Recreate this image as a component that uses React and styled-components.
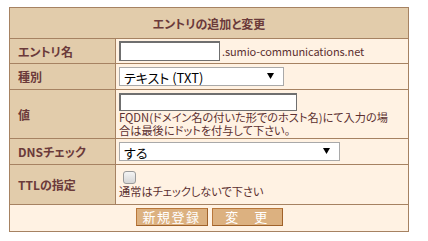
import React from 'react'
import styled, { createGlobalStyle } from 'styled-components'

const GlobalStyle = createGlobalStyle`
  body {
    margin: 0;
    background: #fff;
    font-family: "Noto Sans CJK JP", "Liberation Sans", sans-serif;
  }
`

const Page = styled.div`
  padding: 7px 0 0 9px;
`

const Panel = styled.form`
  width: 398px;
  border: 1px solid #a68262;
  background: #fff2e3;
  font-feature-settings: "palt";
`

const Header = styled.div`
  height: 30px;
  display: flex;
  align-items: center;
  justify-content: center;
  background: #e2ccab;
  border-bottom: 1px solid #a68262;
  color: #6b3a3a;
  font-size: 12px;
  font-weight: bold;
`

const Row = styled.div`
  display: grid;
  grid-template-columns: 106px 1fr;
  height: ${p => p.h}px;
  border-bottom: 1px solid #a68262;
`

const Label = styled.div`
  display: flex;
  align-items: center;
  padding-left: 8px;
  background: #e2ccab;
  border-right: 1px solid #a68262;
  color: #6b3a3a;
  font-size: 12px;
  font-weight: bold;
`

const Cell = styled.div`
  display: flex;
  flex-direction: ${p => (p.column ? 'column' : 'row')};
  align-items: ${p => (p.column ? 'flex-start' : 'center')};
  padding: ${p => p.pad || '0'} 0 0 3px;
  color: #5c3030;
  font-size: 12px;
`

const TextInput = styled.input`
  box-sizing: border-box;
  width: ${p => p.w}px;
  height: ${p => p.h}px;
  margin: 0;
  border: 1px solid #6f6f6f;
  border-top-width: 2px;
  border-left-width: 2px;
  background: #fff;
  padding: 0 2px;
`

const Domain = styled.span`
  margin-left: 2px;
  font-size: 11px;
  letter-spacing: -0.1px;
`

const SelectWrap = styled.div`
  position: relative;
  width: ${p => p.w}px;
  height: 19px;
`

const Select = styled.select`
  box-sizing: border-box;
  appearance: none;
  width: 100%;
  height: 100%;
  margin: 0;
  padding: 0 0 0 4px;
  border: 1px solid #a9a9a9;
  border-radius: 0;
  background: #fff;
  color: #000;
  font-family: "Noto Sans CJK JP", sans-serif;
  font-size: 13px;
  font-feature-settings: "palt";
`

const Arrow = styled.svg`
  position: absolute;
  right: 10px;
  top: 6px;
  pointer-events: none;
`

const Note = styled.div`
  margin-top: ${p => p.gap || 0}px;
  line-height: 13px;
  white-space: nowrap;
  font-size: 11.2px;
`

const Check = styled.input`
  appearance: none;
  box-sizing: border-box;
  width: 13px;
  height: 13px;
  margin: 0 0 0 4px;
  border: 1px solid #9a9a9a;
  border-radius: 3px;
  background: linear-gradient(#f4f4f4, #d6d6d6);
`

const Footer = styled.div`
  height: 26px;
  display: flex;
  justify-content: center;
  gap: 4px;
  padding-top: 3px;
  box-sizing: border-box;
`

const Button = styled.button`
  box-sizing: border-box;
  width: ${p => p.w}px;
  height: 18px;
  margin: 0;
  padding: 0;
  border: 1px solid #b9773a;
  border-right-color: #a0622a;
  border-bottom-color: #a0622a;
  background: #dcb180;
  color: #fff;
  font-family: "Noto Sans CJK JP", sans-serif;
  font-size: 13px;
  line-height: 16px;
  letter-spacing: 1.5px;
`

const DropArrow = () => (
  <Arrow width="7" height="6" viewBox="0 0 7 6">
    <path d="M0 0 H7 L3.5 6 Z" fill="#000" />
  </Arrow>
)

export default function App() {
  return (
    <Page>
      <GlobalStyle />
      <Panel onSubmit={e => e.preventDefault()}>
        <Header>エントリの追加と変更</Header>
        <Row h={24}>
          <Label>エントリ名</Label>
          <Cell>
            <TextInput w={101} h={20} />
            <Domain>.sumio-communications.net</Domain>
          </Cell>
        </Row>
        <Row h={25}>
          <Label>種別</Label>
          <Cell>
            <SelectWrap w={165}>
              <Select defaultValue="TXT">
                <option value="TXT">テキスト (TXT)</option>
              </Select>
              <DropArrow />
            </SelectWrap>
          </Cell>
        </Row>
        <Row h={48}>
          <Label>値</Label>
          <Cell column pad="3px">
            <TextInput w={178} h={18} />
            <Note>
              FQDN(ドメイン名の付いた形でのホスト名)にて入力の場
              <br />
              合は最後にドットを付与して下さい。
            </Note>
          </Cell>
        </Row>
        <Row h={25}>
          <Label>DNSチェック</Label>
          <Cell>
            <SelectWrap w={221}>
              <Select defaultValue="yes">
                <option value="yes">する</option>
              </Select>
              <DropArrow />
            </SelectWrap>
          </Cell>
        </Row>
        <Row h={39}>
          <Label>TTLの指定</Label>
          <Cell column pad="6px">
            <Check type="checkbox" />
            <Note gap={1}>通常はチェックしないで下さい</Note>
          </Cell>
        </Row>
        <Footer>
          <Button w={72}>新規登録</Button>
          <Button w={71}>変　更</Button>
        </Footer>
      </Panel>
    </Page>
  )
}
